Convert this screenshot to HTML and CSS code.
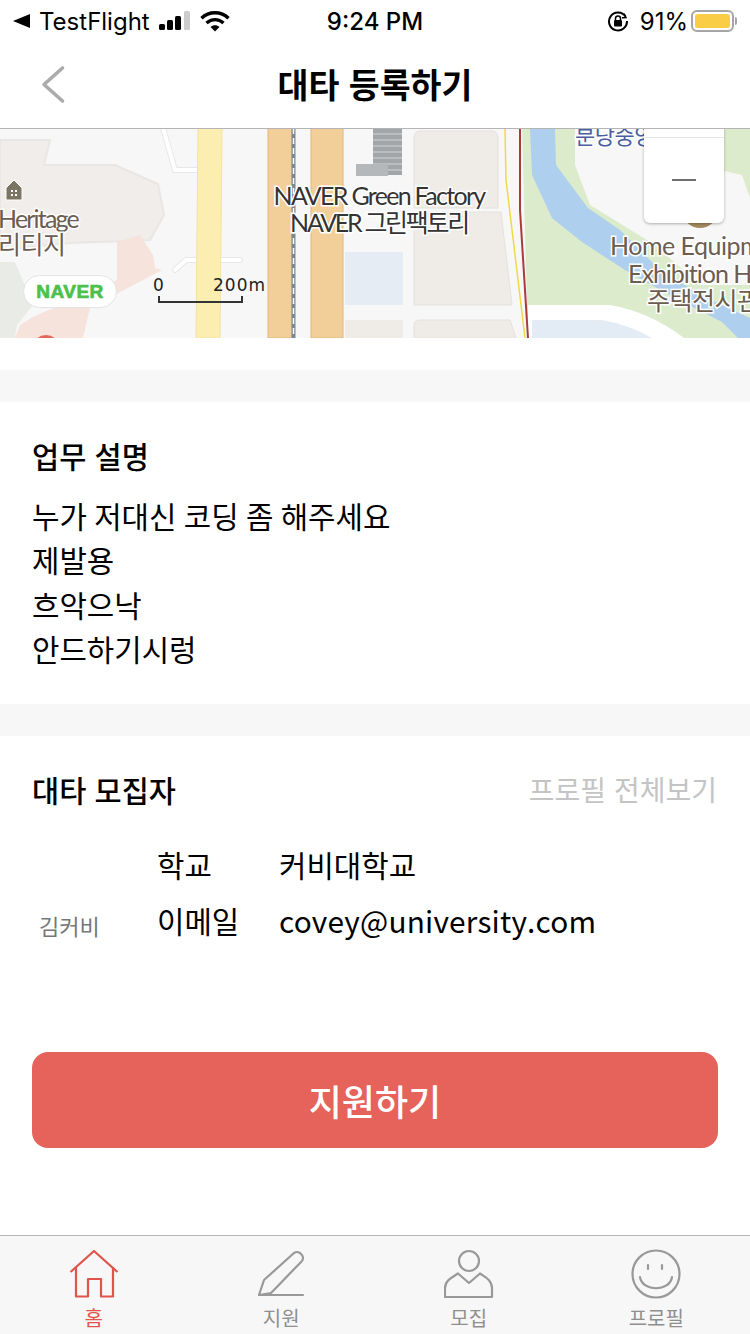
FILE: index.html
```html
<!DOCTYPE html>
<html lang="ko">
<head>
<meta charset="UTF-8" />
<meta name="viewport" content="width=device-width, initial-scale=1.0" />
<title>대타 등록하기</title>
<link rel="stylesheet" href="styles.css">
</head>
<body>

<!-- status bar -->
<div class="status-bar">
  <div class="status-left">
    <svg class="status-back" width="18" height="14" viewBox="0 0 18 14"><path d="M17 0V14L0 7Z" fill="#000"/></svg>
    <span>TestFlight</span>
    <svg class="status-signal" width="32" height="20" viewBox="0 0 32 20">
      <rect x="0" y="13" width="6" height="6" rx="1.5" fill="#000"/>
      <rect x="8" y="9" width="6" height="10" rx="1.5" fill="#000"/>
      <rect x="16" y="5" width="6" height="14" rx="1.5" fill="#000"/>
      <rect x="25" y="0" width="6" height="19" rx="1.5" fill="#ccc"/>
    </svg>
    <svg class="status-wifi" width="30" height="22" viewBox="0 0 30 22" fill="none" stroke="#000" stroke-width="3.4">
      <path d="M1.5 8.2C9 1 21 1 28.500 8.200"/>
      <path d="M6.500 13C11.500 8.500 18.500 8.500 23.500 13"/>
      <path d="M15 21.500L10.500 17C13 14.800 17 14.800 19.500 17Z" fill="#000" stroke="none"/>
    </svg>
  </div>
  <div class="status-time">9:24 PM</div>
  <div class="status-right">
    <svg width="22" height="22" viewBox="0 0 22 22" fill="none" stroke="#000" stroke-width="2">
      <path d="M18.500 6.500A9 9 0 1 0 20 11"/>
      <path d="M17 3.500L19 7.500L15 7.800" stroke-width="1.500"/>
      <rect x="7" y="10" width="8" height="6.500" rx="1" fill="#000" stroke="none"/>
      <path d="M8.500 10V8.500A2.500 2.500 0 0 1 13.500 8.500V10" stroke-width="1.500"/>
    </svg>
    <span class="status-pct">91%</span>
    <div class="battery"><div class="battery-fill"></div></div>
    <div class="battery-nub"></div>
  </div>
</div>

<!-- header -->
<header class="top-nav">
  <svg class="back-icon" width="26" height="42" viewBox="0 0 26 42" fill="none" stroke="#ababab" stroke-width="3.600" stroke-linecap="round" stroke-linejoin="round"><path d="M22.500 5L4 21.500L22.500 38"/></svg>
  <h1 class="page-title">대타 등록하기</h1>
</header>

<!-- map -->
<div class="map">
  <svg class="map-canvas" width="750" height="210" viewBox="0 128 750 210">
    <rect x="0" y="128" width="750" height="210" fill="#f7f7f7"/>
    <!-- heritage park -->
    <path d="M0 140H50L44 165H115L158 184L164 215L150 240L70 243L0 250Z" fill="#f1edea" stroke="#e9e6e3" stroke-width="2"/>
    <path d="M0 262H15L33 305L17 325L15 338H0Z" fill="#e9ece6"/>
    <path d="M117 242L140 235L153 255L155 268L162 270L90 308L83 338H15L20 325L33 317L117 280Z" fill="#f6e3dc"/>
    <circle cx="46" cy="349" r="14" fill="#e2685a"/>
    <path d="M163 128L175 170H198" fill="none" stroke="#e8e8e8" stroke-width="6"/>
    <path d="M163 128L175 170H198" fill="none" stroke="#fff" stroke-width="4"/>
    <path d="M175 270L186 260H240" fill="none" stroke="#e8e8e8" stroke-width="6" stroke-linecap="round"/>
    <path d="M175 270L186 260H240" fill="none" stroke="#fff" stroke-width="4" stroke-linecap="round"/>
    <!-- roads -->
    <path d="M198 128H222L220 338H196Z" fill="#fbeeb0" stroke="#f3e2a0" stroke-width="1"/>
    <rect x="268" y="128" width="24" height="210" fill="#f2cf98" stroke="#e3b678" stroke-width="1"/>
    <rect x="311" y="128" width="32" height="210" fill="#f2cf98" stroke="#e3b678" stroke-width="1"/>
    <line x1="293.500" y1="128" x2="293.500" y2="338" stroke="#7b8a92" stroke-width="4"/>
    <line x1="293.500" y1="128" x2="293.500" y2="338" stroke="#fff" stroke-width="1.500" stroke-dasharray="6 4"/>
    <!-- blocks -->
    <rect x="345" y="252" width="58" height="53" fill="#e5ecf4"/>
    <rect x="345" y="320" width="58" height="18" fill="#efebe7"/>
    <rect x="373" y="128" width="29" height="47" fill="#a3a6a9"/>
    <path d="M373 134H402M373 140H402M373 146H402M373 152H402M373 158H402M373 164H402M373 170H402" stroke="#c4c6c8" stroke-width="1.500"/>
    <rect x="356" y="164" width="32" height="12" fill="#b5b8ba"/>
    <path d="M414 138Q414 131 421 131H491Q498 131 498 138V208H414Z" fill="#efebe7" stroke="#e5e1dd"/>
    <path d="M414 212H501L512 305H414Z" fill="#efebe7" stroke="#e5e1dd"/>
    <path d="M414 338V325Q414 320 420 320H510L516 338Z" fill="#efebe7" stroke="#e5e1dd"/>
    <!-- park and river -->
    <path d="M522 128H750V338H528Z" fill="#dcebcc"/>
    <path d="M575 128H720V170L742 175L750 198V285H700L655 245L590 205L575 165Z" fill="#f7f7f7"/>
    <path d="M530 128H555L556 165L588 208L620 230L655 265L700 295L750 318V338H738L722 322L675 298L628 272L582 242L552 218L532 175Z" fill="#aed0ee"/>
    <path d="M528 305H610Q650 312 684 338H528Z" fill="#fff"/>
    <path d="M532 320H602Q630 325 652 338H532Z" fill="#e3ebf5"/>
    <!-- rail lines -->
    <path d="M505 128L506 180L525 338" fill="none" stroke="#f1d84a" stroke-width="1.500"/>
    <path d="M520 128L520 210L528 338" fill="none" stroke="#a93b3b" stroke-width="2"/>
    <circle cx="700" cy="210" r="18" fill="#a58a5f"/>
    <!-- map labels -->
    <path d="M6 188L14 180L22 188V200H6Z" fill="#7b7664" stroke="#fff" stroke-width="1"/>
    <path d="M11 190H13V192H11ZM15 190H17V192H15ZM11 194H13V196H11ZM15 194H17V196H15Z" fill="#fff"/>
    <text class="map-label label-brown label-heritage" x="-2" y="228">Heritage</text>
    <text class="map-label label-brown" x="-2" y="254">리티지</text>
    <text class="map-label label-dark" x="379" y="205" text-anchor="middle">NAVER Green Factory</text>
    <text class="map-label label-dark label-tight" x="379" y="232" text-anchor="middle">NAVER 그린팩토리</text>
    <text class="map-label label-blue" x="575" y="144">분당중앙</text>
    <text class="map-label label-brown" x="610" y="255">Home Equipment</text>
    <text class="map-label label-brown label-exhibit" x="628" y="283">Exhibition Hall</text>
    <text class="map-label label-brown" x="647" y="310">주택전시관</text>
    <text class="scale-label" x="153" y="291">0</text>
    <text class="scale-label" x="213" y="291">200m</text>
    <path d="M159 296V302H242V296" fill="none" stroke="#333" stroke-width="2"/>
  </svg>
  <div class="naver-badge">NAVER</div>
  <div class="zoom-control">
    <div class="zoom-minus"></div>
  </div>
</div>

<div class="spacer-white"></div>
<div class="divider"></div>

<!-- description -->
<section class="desc">
  <h2 class="section-title">업무 설명</h2>
  <p class="desc-text">누가 저대신 코딩 좀 해주세요<br>제발용<br>흐악으낙<br>안드하기시렁</p>
</section>

<div class="divider"></div>

<!-- recruiter -->
<section class="recruiter">
  <div class="recruiter-head">
    <h2 class="section-title">대타 모집자</h2>
    <span class="profile-link">프로필 전체보기</span>
  </div>
  <div class="recruiter-body">
    <div class="recruiter-name">김커비</div>
    <div class="info-table">
      <span class="info-key">학교</span><span>커비대학교</span>
      <span class="info-key">이메일</span><span class="info-email">covey@university.com</span>
    </div>
  </div>
</section>

<div class="apply-wrap">
  <button class="apply-btn">지원하기</button>
</div>

<!-- tab bar -->
<nav class="tab-bar">
  <a class="tab tab-active" href="#home">
    <svg width="50" height="50" viewBox="0 0 50 50" fill="none" stroke="#e0544c" stroke-width="2.200" stroke-linejoin="round"><path d="M1.500 23L25 2L48.500 23"/><path d="M7 18V47.500H19V30H32V47.500H44V18"/></svg>
    <span>홈</span>
  </a>
  <a class="tab" href="#apply">
    <svg width="50" height="50" viewBox="0 0 50 50" fill="none" stroke="#999" stroke-width="2.200" stroke-linejoin="round" stroke-linecap="round"><path d="M3 46H47"/><path d="M3 46L8 31L38 4Q41 2 44 4L46 6Q48 9 46 12L15 44Z"/></svg>
    <span>지원</span>
  </a>
  <a class="tab" href="#recruit">
    <svg width="50" height="50" viewBox="0 0 50 50" fill="none" stroke="#999" stroke-width="2.200" stroke-linejoin="round"><circle cx="25" cy="12" r="10"/><path d="M1 48V39C1 31 9 28 14 24.500L25 34L36 24.500C41 28 48 31 48 39V48Z"/></svg>
    <span>모집</span>
  </a>
  <a class="tab" href="#profile">
    <svg width="50" height="50" viewBox="0 0 50 50" fill="none" stroke="#999" stroke-width="2.200" stroke-linecap="round"><circle cx="25" cy="25" r="23.500"/><path d="M17 16V20M31 16V20"/><path d="M9 28C11 43 39 43 41 28"/></svg>
    <span>프로필</span>
  </a>
</nav>

</body>
</html>
```

FILE: styles.css
```css
* {
  box-sizing: border-box;
}
body {
  margin: 0;
  width: 750px;
  height: 1334px;
  overflow: hidden;
  background-color: #fff;
  color: #000;
  font-family: "Noto Sans CJK KR", "Noto Sans", sans-serif;
}

/* status bar */
.status-bar {
  height: 42px;
  display: grid;
  grid-template-columns: 1fr auto 1fr;
  align-items: center;
  padding: 0 13px;
  font-family: Inter, "Liberation Sans", sans-serif;
  font-size: 24px;
}
.status-left {
  display: flex;
  align-items: center;
}
.status-back {
  margin-right: 8px;
}
.status-signal {
  margin-left: 9px;
}
.status-wifi {
  margin-left: 9px;
}
.status-time {
  font-weight: 500;
}
.status-right {
  display: flex;
  align-items: center;
  justify-content: flex-end;
}
.status-pct {
  margin-left: 11px;
  margin-right: 3px;
}
.battery {
  width: 43px;
  height: 22px;
  border: 2px solid #a5a5a5;
  border-radius: 6px;
  padding: 2px;
}
.battery-fill {
  width: 100%;
  height: 100%;
  background-color: #f9cd45;
  border-radius: 3px;
}
.battery-nub {
  width: 2px;
  height: 8px;
  margin-left: 1px;
  background-color: #a5a5a5;
  border-radius: 0 2px 2px 0;
}

/* header */
.top-nav {
  position: relative;
  height: 87px;
  display: flex;
  align-items: center;
  justify-content: center;
  padding-bottom: 3px;
  border-bottom: 1px solid #b4b4b4;
}
.back-icon {
  position: absolute;
  left: 40px;
  top: 21px;
}
.page-title {
  margin: 0;
  font-size: 33.600px;
  font-weight: 700;
  line-height: 1;
}

/* map */
.map {
  position: relative;
  height: 209px;
  overflow: hidden;
}
.map-canvas {
  display: block;
  margin-top: -1px;
}
.map-label {
  font-family: Lato, "Noto Sans CJK KR", sans-serif;
  font-size: 25px;
  letter-spacing: -0.5px;
  stroke: #fff;
  stroke-width: 3px;
  paint-order: stroke;
}
.label-brown {
  fill: #6b5d4f;
}
.label-heritage {
  letter-spacing: -1.800px;
}
.label-exhibit {
  letter-spacing: -1px;
}
.label-dark {
  fill: #333;
  letter-spacing: -1.700px;
}
.label-tight {
  letter-spacing: -2.300px;
}
.label-blue {
  fill: #4a5ea0;
  font-size: 22px;
}
.scale-label {
  font-family: "DejaVu Sans", sans-serif;
  font-size: 17px;
  letter-spacing: 1px;
  fill: #222;
}
.naver-badge {
  position: absolute;
  left: 23px;
  top: 146px;
  width: 94px;
  height: 33px;
  display: flex;
  align-items: center;
  justify-content: center;
  background-color: #fff;
  border: 1px solid #e3e3e3;
  border-radius: 17px;
  color: #4cc04a;
  font-family: "Liberation Sans", Arial, sans-serif;
  font-size: 19px;
  font-weight: 700;
  letter-spacing: 0.5px;
  -webkit-text-stroke: 0.7px #4cc04a;
}
.zoom-control {
  position: absolute;
  left: 644px;
  top: -1px;
  width: 80px;
  height: 95px;
  display: flex;
  align-items: center;
  justify-content: center;
  padding-top: 9px;
  background-color: #fff;
  border-radius: 0 0 6px 6px;
  box-shadow: 0 1px 3px rgba(0, 0, 0, 0.3);
}
.zoom-control::before {
  content: "";
  position: absolute;
  left: 0;
  right: 0;
  top: 9px;
  height: 1px;
  background-color: #e6e6e6;
}
.zoom-minus {
  width: 24px;
  height: 2px;
  background-color: #6e6e6e;
}

/* sections */
.spacer-white {
  height: 32px;
}
.divider {
  height: 32px;
  background-color: #f7f7f7;
}
.section-title {
  margin: 0;
  font-size: 29.500px;
  font-weight: 500;
  line-height: 44px;
}
.desc {
  height: 302px;
  padding: 31px 33px 0 32px;
}
.desc-text {
  margin: 16px 0 0;
  font-size: 29.800px;
  line-height: 44.300px;
  word-spacing: -1px;
}
.recruiter {
  height: 316px;
  padding: 31px 33px 0 32px;
}
.recruiter-head {
  display: flex;
  justify-content: space-between;
  align-items: center;
}
.profile-link {
  color: #c4c4c4;
  font-size: 28px;
}
.recruiter-body {
  position: relative;
  display: flex;
  margin-top: 33px;
}
.recruiter-name {
  width: 125px;
  padding: 65px 0 0 7px;
  color: #777;
  font-size: 22px;
  line-height: 32px;
}
.info-table {
  display: grid;
  grid-template-columns: 122px auto;
  row-gap: 14px;
  font-size: 29.800px;
  line-height: 40px;
}
.info-email {
  letter-spacing: 0.200px;
}

/* apply button */
.apply-wrap {
  padding: 0 32px;
}
.apply-btn {
  display: block;
  width: 100%;
  height: 96px;
  border: none;
  border-radius: 16px;
  background-color: #e5635a;
  color: #fff;
  font-family: inherit;
  font-size: 36px;
  font-weight: 500;
}

/* tab bar */
.tab-bar {
  position: absolute;
  left: 0;
  bottom: 0;
  width: 750px;
  height: 99px;
  display: grid;
  grid-template-columns: repeat(4, 1fr);
  padding-top: 13px;
  background-color: #f7f7f7;
  border-top: 1px solid #b4b4b4;
}
.tab {
  display: flex;
  flex-direction: column;
  align-items: center;
  color: #8f8f8f;
  font-size: 20px;
  line-height: 28px;
  text-decoration: none;
}
.tab svg {
  display: block;
  margin-bottom: 5px;
}
.tab-active {
  color: #e0544c;
}
```
